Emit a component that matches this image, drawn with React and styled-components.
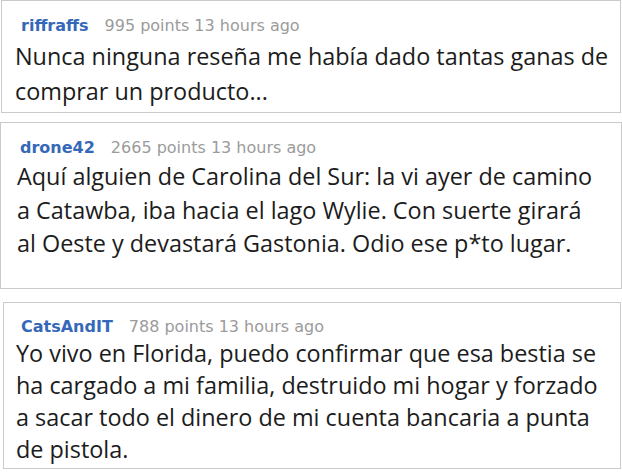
import React from "react";
import styled, { createGlobalStyle } from "styled-components";

const Global = createGlobalStyle`
  html, body { margin: 0; padding: 0; background: #fff; }
  body { width: 622px; height: 472px; overflow: hidden; }
`;

const Page = styled.div`
  display: flex;
  flex-direction: column;
  width: 622px;
`;

const Card = styled.div`
  box-sizing: border-box;
  border: 1px solid #cacaca;
  margin-top: ${(p) => p.$top}px;
  margin-left: ${(p) => p.$left}px;
  width: ${(p) => p.$w}px;
  height: ${(p) => p.$h}px;
  padding: ${(p) => p.$pad};
  overflow: hidden;
  background: #fff;
`;

const Header = styled.div`
  display: flex;
  align-items: baseline;
  gap: 16px;
  padding-left: ${(p) => p.$indent}px;
  font-family: "DejaVu Sans", Verdana, sans-serif;
  font-size: 16px;
  line-height: 20px;
`;

const User = styled.span`
  color: #3568b8;
  font-weight: bold;
`;

const Meta = styled.span`
  color: #9b9b9b;
`;

const Body = styled.p`
  margin: ${(p) => p.$gap}px 0 0;
  font-family: "Open Sans", "Noto Sans", sans-serif;
  font-size: 23.4px;
  line-height: ${(p) => p.$lh}px;
  color: #1c1c1c;
  white-space: nowrap;
`;

const comments = [
  {
    user: "riffraffs",
    meta: "995 points 13 hours ago",
    lines: ["Nunca ninguna reseña me había dado tantas ganas de", "comprar un producto..."],
    top: 0, left: 1, w: 620, h: 113, pad: "15px 0 0 13px", indent: 6, gap: 3, lh: 35,
  },
  {
    user: "drone42",
    meta: "2665 points 13 hours ago",
    lines: [
      "Aquí alguien de Carolina del Sur: la vi ayer de camino",
      "a Catawba, iba hacia el lago Wylie. Con suerte girará",
      "al Oeste y devastará Gastonia. Odio ese p*to lugar.",
    ],
    top: 9, left: 0, w: 622, h: 167, pad: "15px 0 0 16px", indent: 3, gap: 2, lh: 33.5,
  },
  {
    user: "CatsAndIT",
    meta: "788 points 13 hours ago",
    lines: [
      "Yo vivo en Florida, puedo confirmar que esa bestia se",
      "ha cargado a mi familia, destruido mi hogar y forzado",
      "a sacar todo el dinero de mi cuenta bancaria a punta",
      "de pistola.",
    ],
    top: 13, left: 3, w: 618, h: 167, pad: "14px 0 0 12px", indent: 5, gap: 0, lh: 32,
  },
];

export default function App() {
  return (
    <>
      <Global />
      <Page>
        {comments.map((c) => (
          <Card key={c.user} $top={c.top} $left={c.left} $w={c.w} $h={c.h} $pad={c.pad}>
            <Header $indent={c.indent}>
              <User>{c.user}</User>
              <Meta>{c.meta}</Meta>
            </Header>
            <Body $gap={c.gap} $lh={c.lh}>
              {c.lines.map((l, i) => (
                <React.Fragment key={i}>
                  {l}
                  {i < c.lines.length - 1 && <br />}
                </React.Fragment>
              ))}
            </Body>
          </Card>
        ))}
      </Page>
    </>
  );
}
